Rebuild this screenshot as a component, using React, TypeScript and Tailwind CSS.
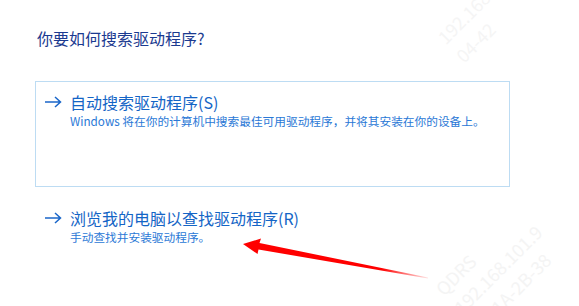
import React from "react";

const font = {
  fontFamily: '"Noto Sans CJK SC", "Noto Sans", sans-serif',
};

function ArrowRight() {
  return (
    <svg width="18" height="12" viewBox="0 0 18 12" className="shrink-0" aria-hidden>
      <path
        d="M1 6 H16.5 M11 1 L16.5 6 L11 11"
        fill="none"
        stroke="#1a66c9"
        strokeWidth="1.5"
      />
    </svg>
  );
}

function Option({
  title,
  desc,
  boxed,
}: {
  title: string;
  desc: string;
  boxed?: boolean;
}) {
  return (
    <div
      className={
        boxed
          ? "ml-[35px] h-[106px] w-[475px] border border-[#bddcf3] pl-[8px] pt-[10px]"
          : "ml-[35px] mt-[21px] pl-[9px]"
      }
    >
      <div className="flex items-center gap-[8px]">
        <ArrowRight />
        <span className="text-[16px] leading-[20px] text-[#1465c6]">{title}</span>
      </div>
      <p className="ml-[26px] mt-[1px] text-[11.7px] leading-[16px] text-[#2a78d6]">{desc}</p>
    </div>
  );
}

export default function App() {
  return (
    <div className="relative h-[306px] w-[579px] overflow-hidden bg-white" style={font}>
      <h1 className="pl-[37px] pt-[28px] text-[16px] font-normal leading-[20px] text-[#1b3a90]">
        你要如何搜索驱动程序?
      </h1>
      <div className="mt-[33px]">
        <Option
          boxed
          title="自动搜索驱动程序(S)"
          desc="Windows 将在你的计算机中搜索最佳可用驱动程序，并将其安装在你的设备上。"
        />
        <Option title="浏览我的电脑以查找驱动程序(R)" desc="手动查找并安装驱动程序。" />
      </div>

      {/* watermark */}
      <div className="pointer-events-none absolute left-[440px] top-[0px] -rotate-45 text-[18px] leading-[26px] text-[#f5f5f5]">
        <div>192.168</div>
        <div>04-42</div>
      </div>
      <div className="pointer-events-none absolute left-[440px] top-[230px] -rotate-45 text-[18px] leading-[26px] text-[#f4f4f4]">
        <div>QDRS</div>
        <div>192.168.101.9</div>
        <div>42-1A-2B-38</div>
      </div>

      {/* red annotation arrow */}
      <svg
        className="pointer-events-none absolute left-0 top-0"
        width="579"
        height="306"
        viewBox="0 0 579 306"
        aria-hidden
      >
        <defs>
          <linearGradient id="fade" x1="243" y1="0" x2="428" y2="0" gradientUnits="userSpaceOnUse">
            <stop offset="0" stopColor="#ff0000" />
            <stop offset="0.75" stopColor="#ff0000" />
            <stop offset="1" stopColor="#ff0000" stopOpacity="0.1" />
          </linearGradient>
        </defs>
        <polygon
          points="243,244 261,238.5 259.5,243 428,277.5 428,278.5 258.5,249.5 257.5,254"
          fill="url(#fade)"
        />
      </svg>
    </div>
  );
}
